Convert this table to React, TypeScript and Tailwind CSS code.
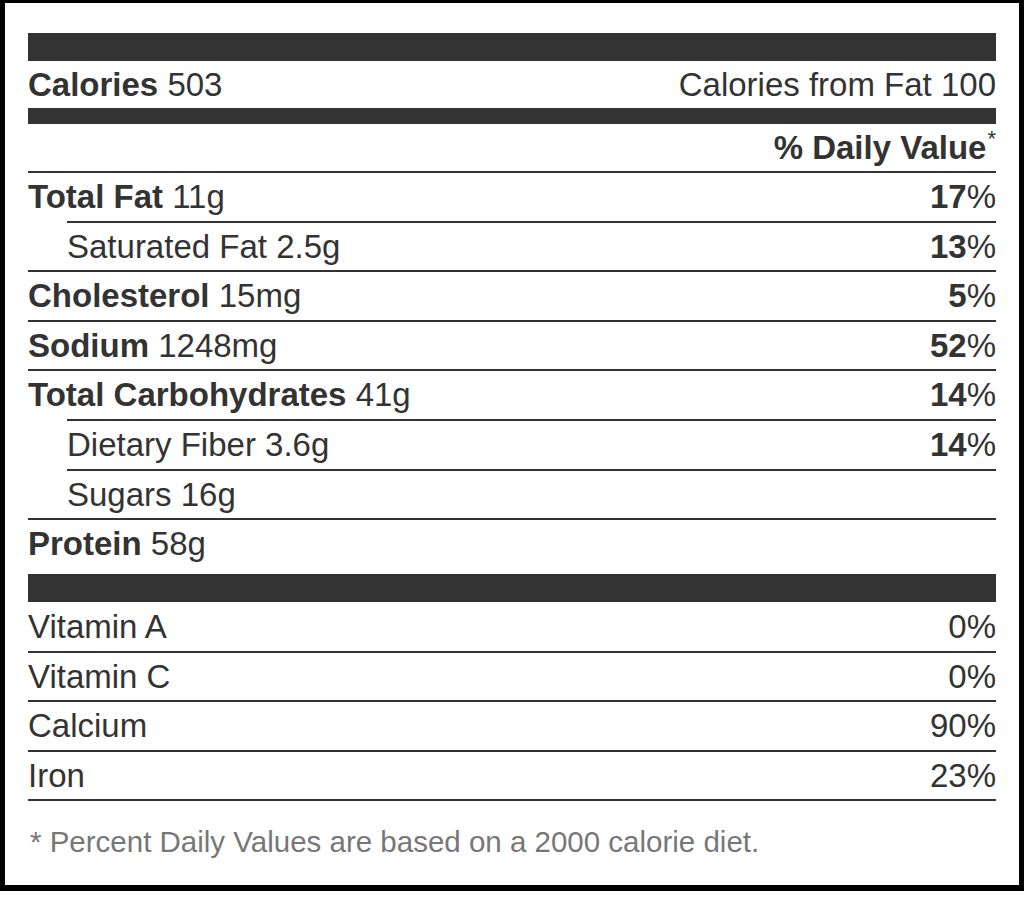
import React from "react";

type Row = {
  label: string;
  amount?: string;
  dv?: string;
  bold?: boolean;
  sub?: boolean;
};

const nutrients: Row[] = [
  { label: "Total Fat", amount: "11g", dv: "17", bold: true },
  { label: "Saturated Fat", amount: "2.5g", dv: "13", sub: true },
  { label: "Cholesterol", amount: "15mg", dv: "5", bold: true },
  { label: "Sodium", amount: "1248mg", dv: "52", bold: true },
  { label: "Total Carbohydrates", amount: "41g", dv: "14", bold: true },
  { label: "Dietary Fiber", amount: "3.6g", dv: "14", sub: true },
  { label: "Sugars", amount: "16g", sub: true },
  { label: "Protein", amount: "58g", bold: true },
];

const vitamins = [
  { label: "Vitamin A", dv: "0%" },
  { label: "Vitamin C", dv: "0%" },
  { label: "Calcium", dv: "90%" },
  { label: "Iron", dv: "23%" },
];

export default function App() {
  return (
    <div className="w-[1024px] h-[906px] bg-white font-[family-name:Liberation_Sans,Arial,sans-serif] text-[#333]">
      <div className="h-[891px] border-black border-t-[3px] border-l-[5px] border-r-[5px] border-b-[6px] px-[23px] pt-[30px]">
        {/* top bar */}
        <div className="h-[28px] bg-[#333]" />
        <div className="h-[47px] flex items-center justify-between text-[33px]">
          <div>
            <span className="font-bold">Calories</span> 503
          </div>
          <div>Calories from Fat 100</div>
        </div>
        <div className="h-[16px] bg-[#333]" />
        <div className="h-[47px] flex items-center justify-end text-[33px] font-bold">
          % Daily Value<sup className="text-[22px] font-normal relative -top-[9px] ml-[1px]">*</sup>
        </div>

        {nutrients.map((n) => (
          <div
            key={n.label}
            className={
              "h-[49.6px] border-t-2 border-[#333] flex items-center justify-between text-[33px] " +
              (n.sub ? "ml-[39px]" : "")
            }
          >
            <div>
              <span className={n.bold ? "font-bold" : ""}>{n.label}</span> {n.amount}
            </div>
            {n.dv && (
              <div>
                <span className="font-bold">{n.dv}</span>%
              </div>
            )}
          </div>
        ))}

        <div className="mt-[6px] h-[28px] bg-[#333]" />

        {vitamins.map((v, i) => (
          <div
            key={v.label}
            className={
              "h-[49.3px] flex items-center justify-between text-[33px] " +
              (i > 0 ? "border-t-2 border-[#333]" : "")
            }
          >
            <div>{v.label}</div>
            <div>{v.dv}</div>
          </div>
        ))}
        <div className="border-t-2 border-[#333]" />

        <div className="pt-[19px] pl-[2px] text-[29.5px] text-[#777]">
          * Percent Daily Values are based on a 2000 calorie diet.
        </div>
      </div>
    </div>
  );
}
